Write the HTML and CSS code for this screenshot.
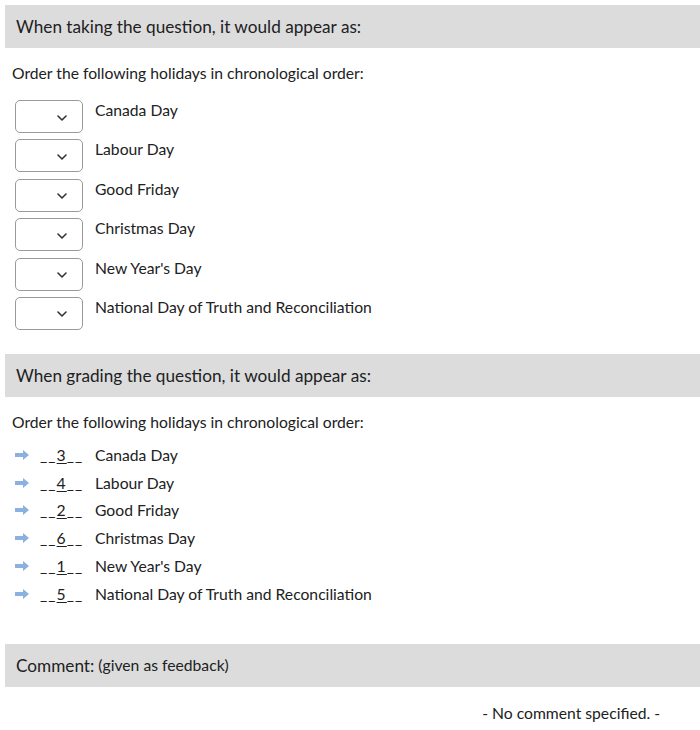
FILE: index.html
```html
<!DOCTYPE html>
<html>
<head>
<meta charset="utf-8">
<link rel="stylesheet" href="styles.css">
</head>
<body>
<div class="page">
  <div class="band"><span class="band-title">When taking the question, it would appear as:</span></div>
  <p class="prompt">Order the following holidays in chronological order:</p>
  <div class="order-list">
    <div class="order-row"><div class="select"><svg class="chev" width="10" height="6" viewBox="0 0 10 6"><path d="M1 1l4 4 4-4" fill="none" stroke="#333" stroke-width="1.6" stroke-linecap="round" stroke-linejoin="round"/></svg></div><span class="label">Canada Day</span></div>
    <div class="order-row"><div class="select"><svg class="chev" width="10" height="6" viewBox="0 0 10 6"><path d="M1 1l4 4 4-4" fill="none" stroke="#333" stroke-width="1.6" stroke-linecap="round" stroke-linejoin="round"/></svg></div><span class="label">Labour Day</span></div>
    <div class="order-row"><div class="select"><svg class="chev" width="10" height="6" viewBox="0 0 10 6"><path d="M1 1l4 4 4-4" fill="none" stroke="#333" stroke-width="1.6" stroke-linecap="round" stroke-linejoin="round"/></svg></div><span class="label">Good Friday</span></div>
    <div class="order-row"><div class="select"><svg class="chev" width="10" height="6" viewBox="0 0 10 6"><path d="M1 1l4 4 4-4" fill="none" stroke="#333" stroke-width="1.6" stroke-linecap="round" stroke-linejoin="round"/></svg></div><span class="label">Christmas Day</span></div>
    <div class="order-row"><div class="select"><svg class="chev" width="10" height="6" viewBox="0 0 10 6"><path d="M1 1l4 4 4-4" fill="none" stroke="#333" stroke-width="1.6" stroke-linecap="round" stroke-linejoin="round"/></svg></div><span class="label">New Year's Day</span></div>
    <div class="order-row"><div class="select"><svg class="chev" width="10" height="6" viewBox="0 0 10 6"><path d="M1 1l4 4 4-4" fill="none" stroke="#333" stroke-width="1.6" stroke-linecap="round" stroke-linejoin="round"/></svg></div><span class="label">National Day of Truth and Reconciliation</span></div>
  </div>

  <div class="band band-2"><span class="band-title">When grading the question, it would appear as:</span></div>
  <p class="prompt">Order the following holidays in chronological order:</p>
  <div class="answer-list">
    <div class="answer-row"><svg class="arrow" width="14" height="10" viewBox="0 0 14 10"><path d="M0 3h8V0l6 5-6 5V7H0z" fill="#8ab1e0"/></svg><span class="num">__<u>3</u>__</span><span class="label">Canada Day</span></div>
    <div class="answer-row"><svg class="arrow" width="14" height="10" viewBox="0 0 14 10"><path d="M0 3h8V0l6 5-6 5V7H0z" fill="#8ab1e0"/></svg><span class="num">__<u>4</u>__</span><span class="label">Labour Day</span></div>
    <div class="answer-row"><svg class="arrow" width="14" height="10" viewBox="0 0 14 10"><path d="M0 3h8V0l6 5-6 5V7H0z" fill="#8ab1e0"/></svg><span class="num">__<u>2</u>__</span><span class="label">Good Friday</span></div>
    <div class="answer-row"><svg class="arrow" width="14" height="10" viewBox="0 0 14 10"><path d="M0 3h8V0l6 5-6 5V7H0z" fill="#8ab1e0"/></svg><span class="num">__<u>6</u>__</span><span class="label">Christmas Day</span></div>
    <div class="answer-row"><svg class="arrow" width="14" height="10" viewBox="0 0 14 10"><path d="M0 3h8V0l6 5-6 5V7H0z" fill="#8ab1e0"/></svg><span class="num">__<u>1</u>__</span><span class="label">New Year's Day</span></div>
    <div class="answer-row"><svg class="arrow" width="14" height="10" viewBox="0 0 14 10"><path d="M0 3h8V0l6 5-6 5V7H0z" fill="#8ab1e0"/></svg><span class="num">__<u>5</u>__</span><span class="label">National Day of Truth and Reconciliation</span></div>
  </div>

  <div class="band band-3"><span class="band-title">Comment:</span> <span class="band-sub">(given as feedback)</span></div>
  <p class="no-comment">- No comment specified. -</p>
</div>
</body>
</html>
```
FILE: styles.css
```css
html, body {
  margin: 0;
  padding: 0;
  background: #fff;
}
body {
  font-family: Lato, "Liberation Sans", sans-serif;
  color: #202122;
}
.page {
  padding: 5px 0 0 5px;
}
.band {
  background: #dcdcdc;
  height: 43px;
  display: flex;
  align-items: center;
  padding-left: 11px;
}
.band-title {
  font-size: 17.2px;
}
.band-sub {
  font-size: 15.7px;
  margin-left: 4px;
}
.prompt {
  margin: 15px 0 0 7px;
  font-size: 15.7px;
  line-height: 20px;
}
.order-list {
  display: flex;
  flex-direction: column;
  gap: 6.4px;
  margin: 17px 0 0 10px;
}
.order-row {
  display: flex;
  align-items: flex-start;
}
.select {
  box-sizing: border-box;
  width: 68px;
  height: 33px;
  border: 1px solid #9a9a9a;
  border-radius: 5px;
  display: flex;
  align-items: center;
  justify-content: flex-end;
  padding-right: 15px;
}
.chev {
  display: block;
  margin-top: 2px;
}
.order-row .label {
  font-size: 15.7px;
  line-height: 20px;
  margin-left: 12px;
}
.band-2 {
  margin-top: 24px;
}
.answer-list {
  display: flex;
  flex-direction: column;
  margin: 9px 0 0 10px;
}
.answer-row {
  display: flex;
  align-items: center;
  height: 27.8px;
  font-size: 15.7px;
}
.arrow {
  display: block;
  margin-right: 11px;
}
.num {
  width: 55px;
  letter-spacing: 1.1px;
}
.num u {
  text-underline-offset: 2px;
}
.band-3 {
  margin-top: 36px;
}
.no-comment {
  margin: 17px 40px 0 0;
  text-align: right;
  font-size: 15.7px;
}
```
